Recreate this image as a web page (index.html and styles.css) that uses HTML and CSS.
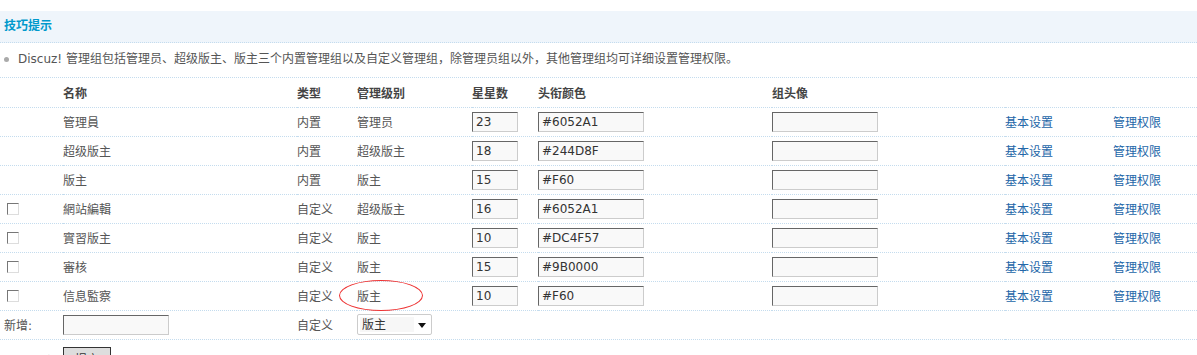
FILE: index.html
```html
<!DOCTYPE html>
<html>
<head>
    <title>管理组</title>
    <link rel="stylesheet" href="styles.css">
</head>
<body>
    <div class="tips-head">技巧提示</div>
    <div class="tips"><span class="dot"></span>Discuz! 管理组包括管理员、超级版主、版主三个内置管理组以及自定义管理组，除管理员组以外，其他管理组均可详细设置管理权限。</div>
    <table class="grid">
        <colgroup>
            <col class="c-chk"><col class="c-name"><col class="c-type"><col class="c-level">
            <col class="c-star"><col class="c-color"><col class="c-icon"><col class="c-edit"><col class="c-perm">
        </colgroup>
        <tr class="head">
            <th></th><th>名称</th><th>类型</th><th>管理级别</th><th>星星数</th><th>头衔颜色</th><th>组头像</th><th></th><th></th>
        </tr>
        <tr>
            <td></td><td>管理員</td><td>内置</td><td>管理员</td>
            <td><input class="txt star" value="23"></td><td><input class="txt color" value="#6052A1"></td><td><input class="txt color"></td>
            <td><a href="#">基本设置</a></td><td><a href="#">管理权限</a></td>
        </tr>
        <tr>
            <td></td><td>超级版主</td><td>内置</td><td>超级版主</td>
            <td><input class="txt star" value="18"></td><td><input class="txt color" value="#244D8F"></td><td><input class="txt color"></td>
            <td><a href="#">基本设置</a></td><td><a href="#">管理权限</a></td>
        </tr>
        <tr>
            <td></td><td>版主</td><td>内置</td><td>版主</td>
            <td><input class="txt star" value="15"></td><td><input class="txt color" value="#F60"></td><td><input class="txt color"></td>
            <td><a href="#">基本设置</a></td><td><a href="#">管理权限</a></td>
        </tr>
        <tr>
            <td><input type="checkbox" class="chk"></td><td>網站編輯</td><td>自定义</td><td>超级版主</td>
            <td><input class="txt star" value="16"></td><td><input class="txt color" value="#6052A1"></td><td><input class="txt color"></td>
            <td><a href="#">基本设置</a></td><td><a href="#">管理权限</a></td>
        </tr>
        <tr>
            <td><input type="checkbox" class="chk"></td><td>實習版主</td><td>自定义</td><td>版主</td>
            <td><input class="txt star" value="10"></td><td><input class="txt color" value="#DC4F57"></td><td><input class="txt color"></td>
            <td><a href="#">基本设置</a></td><td><a href="#">管理权限</a></td>
        </tr>
        <tr>
            <td><input type="checkbox" class="chk"></td><td>審核</td><td>自定义</td><td>版主</td>
            <td><input class="txt star" value="15"></td><td><input class="txt color" value="#9B0000"></td><td><input class="txt color"></td>
            <td><a href="#">基本设置</a></td><td><a href="#">管理权限</a></td>
        </tr>
        <tr>
            <td><input type="checkbox" class="chk"></td><td>信息監察</td><td>自定义</td>
            <td><span class="marked">版主<span class="ring"></span></span></td>
            <td><input class="txt star" value="10"></td><td><input class="txt color" value="#F60"></td><td><input class="txt color"></td>
            <td><a href="#">基本设置</a></td><td><a href="#">管理权限</a></td>
        </tr>
        <tr>
            <td class="label">新增:</td><td><input class="txt color"></td><td>自定义</td>
            <td><div class="select"><span class="value">版主</span><span class="arrow"></span></div></td>
            <td></td><td></td><td></td><td></td><td></td>
        </tr>
        <tr class="foot">
            <td><input type="checkbox" class="chk"> <span class="del">删除</span></td>
            <td><button class="btn">提交</button></td>
            <td></td><td></td><td></td><td></td><td></td><td></td><td></td>
        </tr>
    </table>
</body>
</html>
```

FILE: styles.css
```css
* { box-sizing: border-box; }
body { margin: 0; padding-top: 11px; font: 12px "DejaVu Sans", "Noto Sans CJK SC", sans-serif; color: #555; background: #fff; }
.tips-head { height: 32px; line-height: 31px; padding-left: 4px; background: #eff5fb; border-bottom: 1px dotted #c4dcee; color: #09c; font-weight: bold; }
.tips { height: 35px; line-height: 32px; padding-left: 4px; border-bottom: 1px dotted #c4dcee; }
.tips .dot { display: inline-block; width: 5px; height: 5px; margin: 0 9px 1px 0; border-radius: 50%; background: #aaa; vertical-align: middle; }
.grid { width: 100%; border-collapse: collapse; table-layout: fixed; }
.c-chk { width: 63px; } .c-name { width: 234px; } .c-type { width: 60px; } .c-level { width: 115px; }
.c-star { width: 66px; } .c-color { width: 234px; } .c-icon { width: 233px; } .c-edit { width: 108px; }
.grid th, .grid td { height: 29px; padding: 0; text-align: left; vertical-align: middle; border-bottom: 1px dotted #c4dcee; white-space: nowrap; }
.grid th { font-weight: bold; color: #444; }
.grid td:first-child { padding-left: 4px; }
.grid a { color: #2366a8; text-decoration: none; }
.txt { display: block; height: 20px; padding: 0 3px; font: 12px "DejaVu Sans", sans-serif; color: #333; background: #f9f9f9; border: 1px solid; border-color: #666 #ccc #ccc #666; }
.txt.star { width: 46px; }
.txt.color { width: 106px; }
.chk { appearance: none; width: 12px; height: 12px; margin: 0 0 0 3px; vertical-align: middle; background: #fff; border: 1px solid; border-color: #777 #ddd #ddd #777; }
.marked { position: relative; }
.ring { position: absolute; left: -18px; top: -10px; width: 84px; height: 31px; border: 1px solid #e33; border-radius: 50%; }
.select { display: flex; width: 75px; height: 21px; padding: 2px; border: 1px solid #ccc; border-radius: 2px; background: #fff; color: #333; }
.select .value { flex: 1; line-height: 16px; padding-left: 2px; background: #f7f7f7; }
.select .arrow { width: 15px; position: relative; }
.select .arrow::after { content: ""; position: absolute; left: 4px; top: 6px; border: 4px solid transparent; border-top: 5px solid #111; border-bottom: 0; }
.grid .foot td { height: 30px; vertical-align: top; padding-top: 7px; border-bottom: 0; }
.grid .foot td:first-child { padding-top: 12px; }
.del { margin-left: 6px; }
.btn { width: 48px; height: 24px; padding: 0; font: 12px "Noto Sans CJK SC", sans-serif; color: #333; background: #ddd; border: 1px solid #333; }
```
